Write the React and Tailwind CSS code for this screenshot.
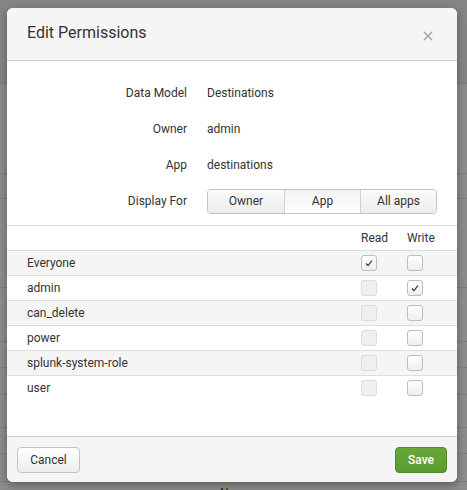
import React, { useState } from 'react';

const roles = [
  { name: 'Everyone', read: true, write: false, readOff: false },
  { name: 'admin', read: false, write: true, readOff: true },
  { name: 'can_delete', read: false, write: false, readOff: true },
  { name: 'power', read: false, write: false, readOff: true },
  { name: 'splunk-system-role', read: false, write: false, readOff: true },
  { name: 'user', read: false, write: false, readOff: true },
];

const Check = ({ checked, disabled }) => {
  if (disabled) {
    return <div className="w-[16px] h-[16px] rounded-[3px] border border-[#dcdcdc] bg-[#efefef]" />;
  }
  return (
    <div className="w-[16px] h-[16px] rounded-[3px] border border-[#bdbdbd] bg-gradient-to-b from-white to-[#eeeeee] flex items-center justify-center">
      {checked && (
        <svg width="10" height="10" viewBox="0 0 10 10">
          <polyline points="2,5.5 4,7.5 8,2.5" fill="none" stroke="#333" strokeWidth="1.2" />
        </svg>
      )}
    </div>
  );
};

const App = () => {
  const [displayFor] = useState('App');

  return (
    <div className="relative w-[467px] h-[490px] overflow-hidden bg-[#8c8c8c]" style={{ fontFamily: 'Roboto, "Liberation Sans", sans-serif' }}>
      {/* page behind the dialog */}
      <div className="absolute inset-0 flex flex-col">
        <div className="shrink-0 h-[84px] bg-[#858585] border-b border-[#7a7a7a]" />
        <div className="shrink-0 h-[90px] border-b border-[#7c7c7c]" />
        <div className="shrink-0 h-[25px] border-b border-[#7c7c7c]" />
        <div className="shrink-0 h-[89px] border-b border-[#7c7c7c]" />
        <div className="shrink-0 h-[54px] border-b border-dotted border-[#6f6f6f]" />
        <div className="shrink-0 h-[26px] border-b border-dotted border-[#6f6f6f]" />
        <div className="shrink-0 h-[27px] border-b border-[#7c7c7c]" />
        <div className="shrink-0 h-[33px] border-b border-[#7c7c7c]" />
        <div className="shrink-0 h-[26px] border-b border-dotted border-[#6f6f6f]" />
        <div className="shrink-0 h-[28px] border-b border-dotted border-[#6f6f6f]" />
        <div className="shrink-0 mt-[5px] pl-[220px] text-[12px] text-[#222] leading-none">Name</div>
      </div>

      {/* dialog */}
      <div className="absolute left-[7px] top-[8px] w-[450px] h-[474px] bg-white rounded-[6px] shadow-[0_3px_8px_rgba(0,0,0,0.35)] overflow-hidden flex flex-col text-[12px] text-[#333]">
        <div className="h-[53px] bg-[#f5f5f5] border-b border-[#cccccc] flex items-center justify-between pl-[20px] pr-[24px]">
          <h3 className="text-[16px] text-[#333] font-normal pb-[2px]">Edit Permissions</h3>
          <svg width="10" height="10" viewBox="0 0 10 10" className="mt-[4px]">
            <path d="M1 1 L9 9 M9 1 L1 9" stroke="#a0a0a0" strokeWidth="1.3" />
          </svg>
        </div>

        <div className="flex-1 flex flex-col">
          <div className="pt-[14px] pb-[6px]">
            {[
              ['Data Model', 'Destinations'],
              ['Owner', 'admin'],
              ['App', 'destinations'],
            ].map(([label, value]) => (
              <div key={label} className="h-[36px] flex items-center">
                <div className="w-[180px] text-right">{label}</div>
                <div className="pl-[20px]">{value}</div>
              </div>
            ))}
            <div className="h-[36px] flex items-center">
              <div className="w-[180px] text-right">Display For</div>
              <div className="ml-[20px] flex h-[25px] border border-[#c3c3c3] rounded-[4px] overflow-hidden">
                {['Owner', 'App', 'All apps'].map((opt, i) => (
                  <div
                    key={opt}
                    className={
                      'flex items-center justify-center ' +
                      (i === 0 ? 'w-[76px] ' : 'w-[76px] border-l border-[#d0d0d0] ') +
                      (opt === displayFor
                        ? 'bg-gradient-to-b from-[#f2f2f2] to-white'
                        : 'bg-gradient-to-b from-[#fbfbfb] to-[#ececec]')
                    }
                  >
                    {opt}
                  </div>
                ))}
              </div>
            </div>
          </div>

          <div className="border-t border-[#dddddd]">
            <div className="h-[24px] flex items-center">
              <div className="flex-1" />
              <div className="w-[46px]">Read</div>
              <div className="w-[50px]">Write</div>
            </div>
            {roles.map((r, i) => (
              <div
                key={r.name}
                className={'h-[25px] border-t border-[#dddddd] flex items-center ' + (i % 2 === 0 ? 'bg-[#f5f5f5]' : 'bg-white')}
              >
                <div className="flex-1 pl-[20px]">{r.name}</div>
                <div className="w-[46px]">
                  <Check checked={r.read} disabled={r.readOff} />
                </div>
                <div className="w-[50px]">
                  <Check checked={r.write} />
                </div>
              </div>
            ))}
          </div>
        </div>

        <div className="h-[46px] bg-[#f5f5f5] border-t border-[#cccccc] flex items-center justify-between px-[10px]">
          <button className="w-[63px] h-[26px] rounded-[4px] border border-[#c3c3c3] bg-gradient-to-b from-white to-[#eeeeee] text-[12px] text-[#333]">
            Cancel
          </button>
          <button className="w-[52px] h-[26px] rounded-[4px] border border-[#4f8a2a] bg-gradient-to-b from-[#68a83a] to-[#5a9a2f] text-[12px] font-medium text-white">
            Save
          </button>
        </div>
      </div>
    </div>
  );
};

export default App;
